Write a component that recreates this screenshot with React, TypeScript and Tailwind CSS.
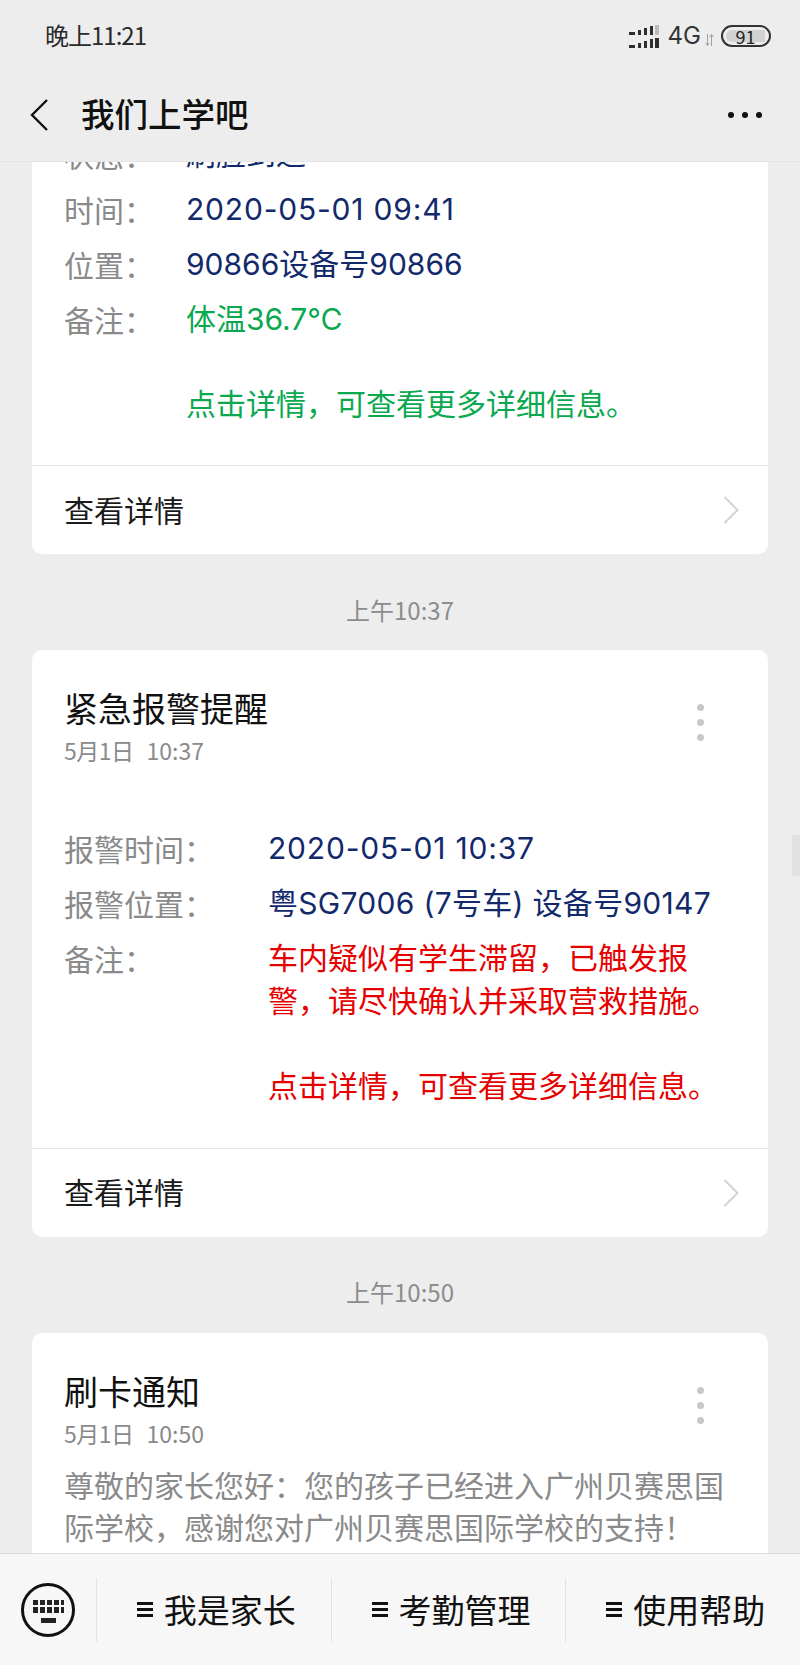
import React from 'react';

const cjk = "font-['Noto_Sans_CJK_SC','Noto_Sans',sans-serif]";
const body = "font-['Inter','Noto_Sans_CJK_SC',sans-serif]";

const Row: React.FC<{ label: string; labelW: string; children: React.ReactNode }> = ({ label, labelW, children }) => (
  <div className={`mb-[12.5px] flex text-[30px] leading-[42.5px] ${body}`}>
    <div className={`${labelW} shrink-0 text-[#8a8a8a] ${cjk}`}>{label}</div>
    <div className="flex-1 whitespace-nowrap">{children}</div>
  </div>
);

const DetailLink = () => (
  <div className="flex h-[89px] items-center justify-between border-t border-[#e8e8e8] pl-[32px] pr-[29px]">
    <span className="-mt-[2px] text-[30px] text-[#1a1a1a]">查看详情</span>
    <svg width="16" height="28" viewBox="0 0 16 28" fill="none" stroke="#d2d2d2" strokeWidth="2">
      <polyline points="1.5,1 14.5,14 1.5,27" />
    </svg>
  </div>
);

const CardHead: React.FC<{ title: string; day: string; time: string }> = ({ title, day, time }) => (
  <div className="flex items-start justify-between pl-[32px] pr-[64px]">
    <div>
      <div className="text-[34px] leading-[48px] text-[#111]">{title}</div>
      <div className="mt-[1px] flex gap-[13px] text-[23px] leading-[34px] text-[#8a8a8a]">
        <span className="tracking-[-0.5px]">{day}</span>
        <span>{time}</span>
      </div>
    </div>
    <div className="mt-[20px] flex flex-col gap-[8px]">
      <div className="h-[7px] w-[7px] rounded-full bg-[#c8c8cc]" />
      <div className="h-[7px] w-[7px] rounded-full bg-[#c8c8cc]" />
      <div className="h-[7px] w-[7px] rounded-full bg-[#c8c8cc]" />
    </div>
  </div>
);

const Stamp: React.FC<{ text: string }> = ({ text }) => (
  <div className="flex h-[96px] items-center justify-center pt-[15px] text-[24px] text-[#8c8c8c]">{text}</div>
);

const MenuItem: React.FC<{ text: string }> = ({ text }) => (
  <div className="flex h-[64px] flex-1 items-center justify-center gap-[11px] border-l border-[#e2e2e2] pl-[5px]">
    <div className="flex flex-col gap-[3px]">
      <div className="h-[3px] w-[16px] bg-[#111]" />
      <div className="h-[3px] w-[16px] bg-[#111]" />
      <div className="h-[3px] w-[16px] bg-[#111]" />
    </div>
    <span className="text-[33px] text-[#111]">{text}</span>
  </div>
);

export default function App() {
  return (
    <div className={`relative flex h-[1665px] w-[800px] flex-col overflow-hidden bg-[#ededed] ${cjk}`}>
      {/* status + nav */}
      <div className="z-10 h-[162px] shrink-0 border-b border-[#e4e4e4] bg-[#ededed]">
        <div className="flex h-[72px] items-center justify-between pl-[45px] pr-[29px]">
          <span className="-mt-[2px] text-[24px] tracking-[-1px] text-[#2a2a2a]">晚上11:21</span>
          <div className="flex items-center">
            <svg width="30" height="23" viewBox="0 0 30 23">
              <g fill="#2e2e2e">
                <rect x="0" y="7" width="6" height="3" />
                <rect x="9" y="5" width="3" height="5" />
                <rect x="15" y="3" width="3" height="7" />
                <rect x="21" y="1" width="3" height="9" />
                <rect x="0" y="20" width="6" height="3" />
                <rect x="9" y="18" width="3" height="5" />
                <rect x="15" y="16" width="3" height="7" />
                <rect x="21" y="14" width="3" height="9" />
                <rect x="26" y="13" width="4" height="10" />
              </g>
              <rect x="26" y="0" width="4" height="10" fill="#bdbdbd" />
            </svg>
            <span className="ml-[9px] font-['Inter',sans-serif] text-[24px] text-[#333]">4G</span>
            <svg width="9" height="12" viewBox="0 0 9 12" className="ml-[4px] mt-[8px]" fill="none" stroke="#a0a0a0" strokeWidth="1">
              <path d="M2.5 0V11M0.5 9L2.5 11.5M6.5 12V1M4.5 3L6.5 0.5M8.5 3L6.5 0.5M4.5 9L2.5 11.5" />
            </svg>
            <div className="ml-[7px] flex h-[22px] w-[50px] items-center rounded-full border-[2px] border-[#333] p-[3px]">
              <div className="flex h-full w-[39px] items-center justify-center rounded-l-full bg-[#d2d2d2] text-[18px] text-[#222]">91</div>
            </div>
          </div>
        </div>
        <div className="flex h-[86px] items-center justify-between pl-[30px] pr-[38px]">
          <div className="flex items-center">
            <svg width="18" height="32" viewBox="0 0 18 32" fill="none" stroke="#111" strokeWidth="2.4">
              <polyline points="17,1 2,16 17,31" />
            </svg>
            <span className="-mt-[3px] ml-[33px] text-[33.5px] font-medium text-[#111]">我们上学吧</span>
          </div>
          <div className="flex gap-[8px]">
            <div className="h-[6px] w-[6px] rounded-full bg-[#111]" />
            <div className="h-[6px] w-[6px] rounded-full bg-[#111]" />
            <div className="h-[6px] w-[6px] rounded-full bg-[#111]" />
          </div>
        </div>
      </div>

      {/* messages */}
      <div className="flex-1 overflow-hidden px-[32px]">
        <div className="-mt-[29px]">
          <div className="rounded-b-[10px] bg-white">
            <div className="pb-[27px] pl-[32px] pr-[30px]">
              <Row label="状态：" labelW="w-[122px]"><span className="text-[#12296b]">刷脸到达</span></Row>
              <Row label="时间：" labelW="w-[122px]"><span className="tracking-[0.8px] text-[#12296b]">2020-05-01 09:41</span></Row>
              <Row label="位置：" labelW="w-[122px]"><span className="text-[#12296b]">90866设备号90866</span></Row>
              <Row label="备注：" labelW="w-[122px]">
                <div className="text-[#0aa84f]">体温36.7℃</div>
                <div className="mt-[42.5px] text-[#0aa84f]">点击详情，可查看更多详细信息。</div>
              </Row>
            </div>
            <DetailLink />
          </div>

          <Stamp text="上午10:37" />

          <div className="rounded-[10px] bg-white pt-[34px]">
            <CardHead title="紧急报警提醒" day="5月1日" time="10:37" />
            <div className="pb-[28px] pl-[32px] pr-[53px] pt-[60px]">
              <Row label="报警时间：" labelW="w-[204px]"><span className="tracking-[0.8px] text-[#12296b]">2020-05-01 10:37</span></Row>
              <Row label="报警位置：" labelW="w-[204px]"><span className="tracking-[0.3px] text-[#12296b]">粤SG7006 (7号车) 设备号90147</span></Row>
              <Row label="备注：" labelW="w-[204px]">
                <div className="text-[#e60000]">
                  车内疑似有学生滞留，已触发报
                  <br />
                  警，请尽快确认并采取营救措施。
                </div>
                <div className="mt-[42.5px] text-[#e60000]">点击详情，可查看更多详细信息。</div>
              </Row>
            </div>
            <DetailLink />
          </div>

          <Stamp text="上午10:50" />

          <div className="rounded-[10px] bg-white pb-[60px] pt-[34px]">
            <CardHead title="刷卡通知" day="5月1日" time="10:50" />
            <div className="pl-[32px] pr-[33px] pt-[13px] text-[30px] leading-[42.5px] text-[#8a8a8a]">
              尊敬的家长您好：您的孩子已经进入广州贝赛思国际学校，感谢您对广州贝赛思国际学校的支持！
            </div>
          </div>
        </div>
      </div>

      {/* bottom menu */}
      <div className="z-10 flex h-[112px] shrink-0 items-center border-t border-[#d9d9d9] bg-[#f7f7f7]">
        <div className="flex w-[96px] shrink-0 items-center justify-center">
          <svg width="54" height="54" viewBox="0 0 54 54">
            <circle cx="27" cy="27" r="25.5" fill="none" stroke="#111" strokeWidth="3" />
            <g fill="#222">
              <rect x="12" y="17" width="5" height="5" />
              <rect x="19" y="17" width="5" height="5" />
              <rect x="26" y="17" width="5" height="5" />
              <rect x="33" y="17" width="5" height="5" />
              <rect x="40" y="17" width="3" height="5" />
              <rect x="12" y="24" width="5" height="6" />
              <rect x="19" y="24" width="5" height="6" />
              <rect x="26" y="24" width="5" height="6" />
              <rect x="33" y="24" width="5" height="6" />
              <rect x="40" y="24" width="3" height="6" />
              <rect x="20" y="35" width="15" height="5" />
            </g>
          </svg>
        </div>
        <MenuItem text="我是家长" />
        <MenuItem text="考勤管理" />
        <MenuItem text="使用帮助" />
      </div>

      {/* scrollbar thumb */}
      <div className="absolute right-0 top-[835px] h-[41px] w-[8px] bg-[#e2e2e2]" />
    </div>
  );
}
